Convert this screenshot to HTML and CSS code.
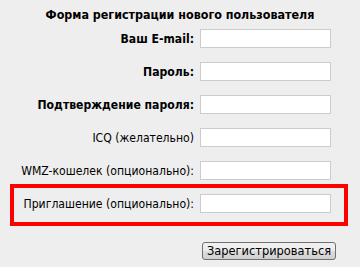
FILE: index.html
```html
<!DOCTYPE html>
<html lang="ru">
<head>
  <meta charset="UTF-8">
  <title>Регистрация</title>
  <link rel="stylesheet" href="styles.css">
</head>
<body>
  <form class="reg-form">
    <div class="title">Форма регистрации нового пользователя</div>

    <div class="row">
      <label class="required" for="email">Ваш E-mail:</label>
      <input type="text" id="email">
    </div>

    <div class="row">
      <label class="required" for="pass">Пароль:</label>
      <input type="password" id="pass">
    </div>

    <div class="row">
      <label class="required" for="pass2">Подтверждение пароля:</label>
      <input type="password" id="pass2">
    </div>

    <div class="row">
      <label for="icq">ICQ (желательно)</label>
      <input type="text" id="icq">
    </div>

    <div class="row">
      <label for="wmz">WMZ-кошелек (опционально):</label>
      <input type="text" id="wmz">
    </div>

    <div class="row highlight">
      <label for="invite">Приглашение (опционально):</label>
      <input type="text" id="invite">
    </div>

    <div class="actions">
      <button type="button">Зарегистрироваться</button>
    </div>
  </form>
</body>
</html>
```

FILE: styles.css
```css
body {
  margin: 0;
  background: #eeeeee;
  font-family: "DejaVu Sans Condensed", "DejaVu Sans", Verdana, sans-serif;
  font-stretch: condensed;
  font-size: 12.1px;
  color: #000;
}

.reg-form {
  width: 360px;
  padding-top: 7px;
}

.title {
  font-weight: bold;
  font-size: 12.4px;
  text-align: center;
  height: 22px;
  line-height: 16px;
}

.row {
  display: flex;
  align-items: center;
  margin-bottom: 14px;
}

.row label {
  flex: none;
  width: 194px;
  text-align: right;
  margin-right: 6px;
  white-space: nowrap;
}

.row label.required {
  font-weight: bold;
}

.row input {
  flex: none;
  width: 131px;
  height: 19px;
  box-sizing: border-box;
  border: 1px solid #cccccc;
  background: white;
  margin: 0;
  padding: 1px 3px;
  font: inherit;
}

.row.highlight {
  margin: -10px 0 0 10px;
  width: 338px;
  box-sizing: border-box;
  border: 4px solid #ff0000;
  padding: 6px 0 9px 0;
}

.row.highlight label {
  width: 180px;
}

.actions {
  padding: 16px 0 0 202px;
}

.actions button {
  display: block;
  width: 134px;
  height: 18px;
  padding: 0;
  font: inherit;
  font-size: 12.7px;
  line-height: 14px;
  color: #000;
  border: 1px solid #707070;
  border-radius: 3px;
  background: linear-gradient(#f2f2f2 0%, #ebebeb 50%, #dddddd 51%, #cfcfcf 100%);
}
```
